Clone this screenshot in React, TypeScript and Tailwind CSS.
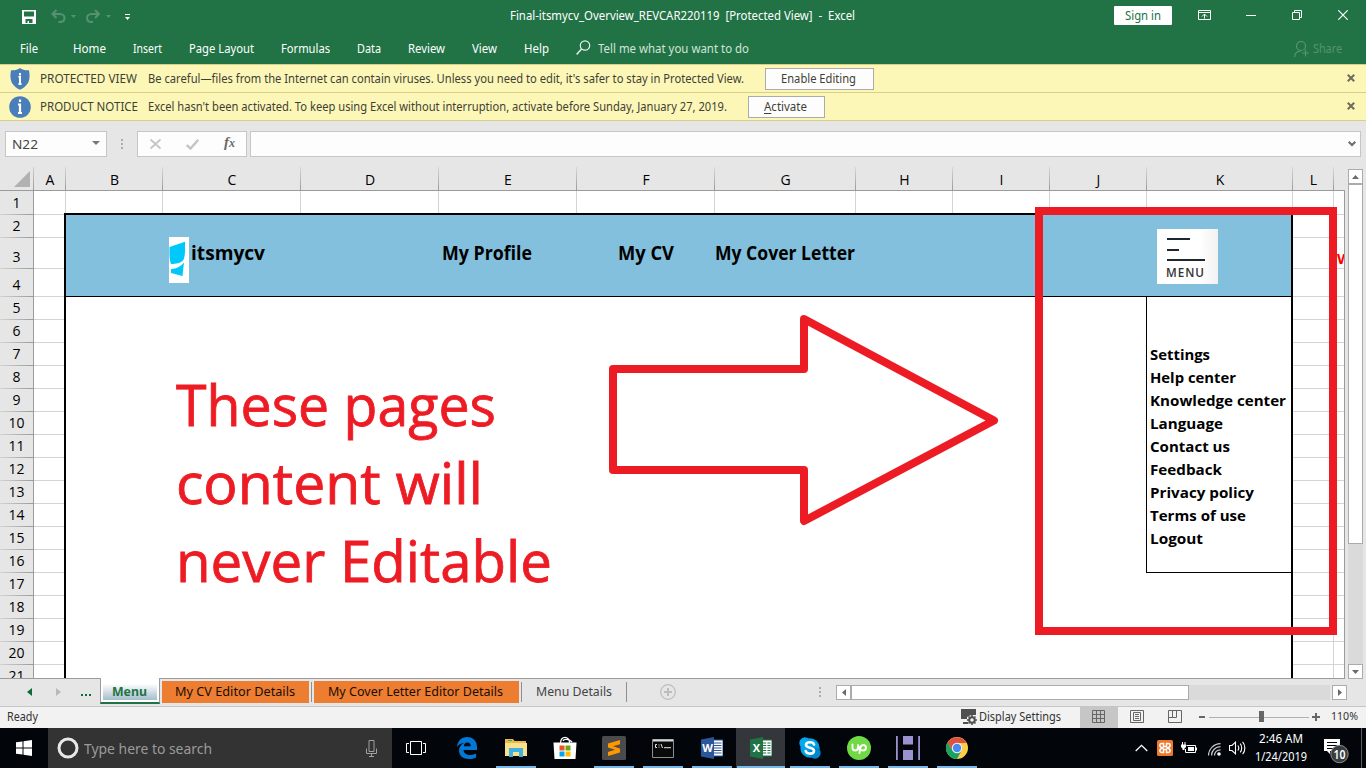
import { useLayoutEffect, useRef, useState } from "react";
import type { ReactNode } from "react";

/* Text run that is condensed or widened to occupy an exact width. */
function Fit({ w, className = "", children }: { w: number; className?: string; children: ReactNode }) {
  const ref = useRef<HTMLSpanElement>(null);
  const [k, setK] = useState(1);
  useLayoutEffect(() => {
    if (ref.current && ref.current.offsetWidth) {
      const r = document.createRange();
      r.selectNodeContents(ref.current);
      const natural = r.getBoundingClientRect().width / k;
      if (natural > 0 && Math.abs(w / natural - k) > 0.001) setK(w / natural);
    }
  }, [w]);
  return (
    <span className={"inline-block shrink-0 whitespace-pre text-left " + className} style={{ width: w }}>
      <span ref={ref} className="inline-block origin-left" style={{ transform: `scaleX(${k})` }}>
        {children}
      </span>
    </span>
  );
}

function Icon({ w, h, className = "", children }: { w: number; h: number; className?: string; children: ReactNode }) {
  return (
    <svg width={w} height={h} viewBox={`0 0 ${w} ${h}`} className={"block shrink-0 " + className} fill="none">
      {children}
    </svg>
  );
}

function TitleBar() {
  return (
    <div className="flex h-8 items-start text-[12px] leading-[31px] text-white">
      <Icon w={14} h={14} className="ml-[22px] mt-[10px]">
        <path fillRule="evenodd" fill="#fff" d="M0 0H14V14H0ZM2 1.5V6.5H12V1.5ZM3.5 9V13H5.5V11H7V13H10.5V9Z" />
      </Icon>
      <Icon w={26} h={14} className="ml-[15px] mt-[9px]">
        <path d="M5.500 1L1.500 5L5.500 9M1.500 5H9C12 5 13.500 7 13.500 9C13.500 11.500 12 13 9 13H7.500" stroke="#549273" strokeWidth="2" />
        <path d="M20 6H25L22.500 9Z" fill="#549273" />
      </Icon>
      <Icon w={26} h={14} className="ml-[9px] mt-[9px]">
        <path d="M9 1L13 5L9 9M13 5H5.500C2.500 5 1 7 1 9C1 11.500 2.500 13 5.500 13H7" stroke="#549273" strokeWidth="2" />
        <path d="M20 6H25L22.500 9Z" fill="#549273" />
      </Icon>
      <Icon w={6} h={7} className="ml-[13px] mt-[13px]">
        <path d="M0 1.500H5" stroke="#fff" />
        <path d="M0 4H5L2.500 7Z" fill="#fff" />
      </Icon>
      <Fit w={345} className="ml-[379px]">{"Final-itsmycv_Overview_REVCAR220119  [Protected View]  -  Excel"}</Fit>
      <div className="ml-[259px] mt-[6px] flex h-[19px] w-[58px] justify-center rounded-[1px] bg-white text-[#217346]">
        <Fit w={36} className="leading-[19px]">Sign in</Fit>
      </div>
      <Icon w={13} h={10} className="ml-[26px] mt-[10px]">
        <path d="M.5 .5H12.500V9.500H.5ZM.5 2.500H12.500M6.500 8.500V4M4 6.500L6.500 4L9 6.500" stroke="#fff" />
      </Icon>
      <div className="ml-[35px] mt-[15px] h-px w-[10px] bg-white" />
      <Icon w={10} h={10} className="ml-[36px] mt-[10px]">
        <path d="M.5 2.500H7.500V9.500H.5ZM2.500 2V.5H9.500V7.500H8" stroke="#fff" />
      </Icon>
      <Icon w={10} h={10} className="ml-[36px] mt-[10px]">
        <path d="M.3 .3L9.700 9.700M9.700 .3L.3 9.700" stroke="#fff" strokeWidth="1.200" />
      </Icon>
    </div>
  );
}

const MENUS: [string, number, string][] = [
  ["File", 18, "ml-[20px]"],
  ["Home", 33, "ml-[35px]"],
  ["Insert", 29, "ml-[27px]"],
  ["Page Layout", 65, "ml-[27px]"],
  ["Formulas", 49, "ml-[27px]"],
  ["Data", 24, "ml-[27px]"],
  ["Review", 37, "ml-[27px]"],
  ["View", 25, "ml-[27px]"],
  ["Help", 25, "ml-[27px]"],
];

function MenuRow() {
  return (
    <div className="flex h-8 text-[12px] leading-[33px] text-white">
      {MENUS.map(([t, w, m]) => (
        <Fit key={t} w={w} className={m}>{t}</Fit>
      ))}
      <Icon w={15} h={16} className="ml-[27px] mt-[8px]">
        <circle cx="9" cy="5.500" r="4.700" stroke="#e4efe8" strokeWidth="1.200" />
        <path d="M5.500 9L.6 14.500" stroke="#e4efe8" strokeWidth="1.500" />
      </Icon>
      <Fit w={151} className="ml-[7px] text-[#d3e3da]">Tell me what you want to do</Fit>
      <Icon w={16} h={17} className="ml-[545px] mt-[9px]">
        <circle cx="7" cy="5" r="4.500" stroke="#57946f" strokeWidth="1.200" />
        <path d="M.5 16C.8 12.500 3 10 7 9.800M11.500 8.500V15.500M8 12H15" stroke="#57946f" strokeWidth="1.200" />
      </Icon>
      <Fit w={29} className="ml-[3px] text-[#57946f]">Share</Fit>
    </div>
  );
}

function NoticeClose() {
  return (
    <Icon w={8} h={8} className="ml-auto mr-[11px] mt-[-1px]">
      <path d="M.8 .8L7.200 7.200M7.200 .8L.8 7.200" stroke="#6e6c5a" strokeWidth="2" />
    </Icon>
  );
}

function Notices() {
  return (
    <div className="bg-[#fcf7b6] text-[12px] text-[#3f3f37]">
      <div className="flex h-[29px] items-center border-y border-[#d6d088] leading-[27px]">
        <Icon w={20} h={22} className="ml-[10px]">
          <path d="M10 0C8 2 4 2.500 1 2.300C-.5 11 .5 17 10 21.800C19.500 17 20.500 11 19 2.300C16 2.500 12 2 10 0Z" fill="#4a7ebb" />
          <path d="M10 5V7.500M8.500 9H10V16M8.500 16H11.500M10 8.500V16" stroke="#fff" strokeWidth="2" />
        </Icon>
        <Fit w={97} className="ml-[10px]">PROTECTED VIEW</Fit>
        <Fit w={596} className="ml-[11px]">Be careful—files from the Internet can contain viruses. Unless you need to edit, it's safer to stay in Protected View.</Fit>
        <div className="ml-[21px] flex h-[22px] w-[109px] border border-[#ababab] bg-[#fdfdfd] pl-[15px] leading-[20px]">
          <Fit w={75}>Enable Editing</Fit>
        </div>
        <NoticeClose />
      </div>
      <div className="flex h-[28px] items-center border-b border-[#d6d088] leading-[27px]">
        <Icon w={22} h={22} className="ml-[9px]">
          <circle cx="11" cy="11" r="10.800" fill="#4a7ebb" />
          <path d="M11 3.500V6M9 8.500H11M11 7.500V17M9 17H13" stroke="#fff" strokeWidth="2.200" />
        </Icon>
        <Fit w={98} className="ml-[9px]">PRODUCT NOTICE</Fit>
        <Fit w={579} className="ml-[10px]">Excel hasn't been activated. To keep using Excel without interruption, activate before Sunday, January 27, 2019.</Fit>
        <div className="ml-[21px] flex h-[22px] w-[77px] border border-[#ababab] bg-[#fdfdfd] pl-[15px] leading-[20px]">
          <Fit w={43}><span className="underline underline-offset-2">A</span>ctivate</Fit>
        </div>
        <NoticeClose />
      </div>
    </div>
  );
}

function FormulaBar() {
  return (
    <div className="flex h-[46px] items-start pt-[10px]">
      <div className="ml-[5px] flex h-[26px] w-[102px] items-center border border-[#c6c6c6] bg-[#fdfdfd] pl-[6px] text-[13px] text-[#444]">
        <Fit w={26} className="mt-[2px]">N22</Fit>
        <Icon w={8} h={4} className="ml-auto mr-[6px] -mt-[2px]"><path d="M0 0H8L4 4Z" fill="#777" /></Icon>
      </div>
      <Icon w={2} h={10} className="ml-[14px] mt-[8px]">
        <path d="M0 0H2V2H0ZM0 4H2V6H0ZM0 8H2V10H0Z" fill="#ababab" />
      </Icon>
      <div className="ml-[14px] flex h-[26px] w-[110px] items-center border border-[#c6c6c6] bg-[#fdfdfd]">
        <Icon w={11} h={10} className="ml-[12px]">
          <path d="M.5 .5L10.500 9.500M10.500 .5L.5 9.500" stroke="#c3c3c3" strokeWidth="1.800" />
        </Icon>
        <Icon w={13} h={11} className="ml-[25px]">
          <path d="M.8 6L4.500 9.500L12.300 .8" stroke="#c3c3c3" strokeWidth="2.400" />
        </Icon>
        <span className="-mt-1 ml-[25px] font-['Liberation_Serif',serif] text-[15px] font-bold italic leading-none text-[#6a6a6a]">f<span className="text-[12px]">x</span></span>
      </div>
      <div className="ml-[3px] flex h-[26px] w-[1111px] items-center border border-[#c6c6c6] bg-[#fdfdfd]">
        <Icon w={8} h={6} className="ml-auto mr-[4px] -mt-[1px]"><path d="M.7 .7L4 4L7.300 .7" stroke="#6a6a6a" strokeWidth="2" /></Icon>
      </div>
    </div>
  );
}

const COLS: [string, string][] = [
  ["A", "w-[32px]"], ["B", "w-[97px]"], ["C", "w-[138px]"], ["D", "w-[138px]"], ["E", "w-[138px]"],
  ["F", "w-[138px]"], ["G", "w-[141px]"], ["H", "w-[97px]"], ["I", "w-[97px]"], ["J", "w-[97px]"],
  ["K", "w-[146px]"], ["L", "w-[41px]"],
];

const ROWS: [number, string][] = [
  [1, "h-[24px]"], [2, "h-[23px]"], [3, "h-[31px]"], [4, "h-[28px]"],
  ...Array.from({ length: 17 }, (_, i): [number, string] => [i + 5, "h-[23px]"]),
];

const LINKS: [string, number][] = [
  ["Settings", 60], ["Help center", 86], ["Knowledge center", 136], ["Language", 73], ["Contact us", 80],
  ["Feedback", 72], ["Privacy policy", 104], ["Terms of use", 96], ["Logout", 53],
];

function PageBlock() {
  return (
    <div className="z-10 -ml-[2px] -mt-[2px] flex w-[1229px] flex-col border-x-2 border-t-2 border-black bg-white">
      <div className="flex h-[82px] shrink-0 items-start border-b border-black bg-[#82c0dd] text-[19px] font-bold leading-[26px] text-black">
        <Icon w={20} h={46} className="ml-[103px] mt-[22px] bg-white">
          <path d="M.5 10L16 4.800C16 12 16.500 20 14 23.500C12 26 7 27 2 27C0 22 .5 15 .5 10Z" fill="#00c8fa" />
          <path d="M2 32C8 32 12 29 15 25.500C14.500 30 14 34 13.500 39L2 36Z" fill="#00c8fa" />
        </Icon>
        <Fit w={74} className="ml-[2px] mt-[25px]">itsmycv</Fit>
        <Fit w={90} className="ml-[177px] mt-[25px]">My Profile</Fit>
        <Fit w={56} className="ml-[86px] mt-[25px]">My CV</Fit>
        <Fit w={140} className="ml-[41px] mt-[25px]">My Cover Letter</Fit>
        <div className="ml-[302px] mt-[14px] flex h-[55px] w-[61px] flex-col items-start bg-linear-to-r from-white from-70% to-[#f1f1f1] pl-[10px] pt-[9px]">
          <div className="h-[2px] w-[23px] bg-[#1d2733]" />
          <div className="mt-[9px] h-[2px] w-[12px] bg-[#1d2733]" />
          <div className="mt-[8px] h-[2px] w-[38px] bg-[#1d2733]" />
          <Fit w={39} className="-ml-px mt-[4px] text-[12px] font-semibold leading-[16px] tracking-[1px] text-[#333]">MENU</Fit>
        </div>
      </div>
      <div className="flex h-[276px] shrink-0 justify-end">
        <div className="flex w-[145px] flex-col border-b border-l border-black pl-[3px] pt-[46px] text-[14px] font-bold leading-[23px] text-black">
          {LINKS.map(([t, w]) => <Fit key={t} w={w}>{t}</Fit>)}
        </div>
      </div>
    </div>
  );
}

function Sheet() {
  return (
    <div className="relative flex h-[512px] w-[1345px] flex-col overflow-hidden border-b border-[#9b9b9b] font-['Open_Sans',sans-serif] text-[14px] text-black">
      <div className="flex h-[24px] shrink-0 leading-[25px]">
        <div className="flex w-[34px] shrink-0 items-end justify-end border-b border-[#9b9b9b]">
          <Icon w={16} h={16} className="mb-[3px] mr-[3px]"><path d="M16 0V16H0Z" fill="#b1b1b1" /></Icon>
          <div className="h-[23px] w-px bg-linear-to-b from-[#d0d0d0] to-[#9b9b9b]" />
        </div>
        {COLS.map(([c, w]) => (
          <div key={c} className={"flex shrink-0 border-b border-[#9b9b9b] " + w}>
            <span className="flex-1 pl-px text-center">{c}</span>
            <span className="w-px bg-linear-to-b from-[#d8d8d8] to-[#9b9b9b]" />
          </div>
        ))}
        <div className="flex-1 border-b border-[#9b9b9b]" />
      </div>
      <div className="flex min-h-0 flex-1">
        <div className="w-[34px] shrink-0 border-r border-[#9b9b9b] leading-[21px]">
          {ROWS.map(([n, h]) => (
            <div key={n} className={"flex flex-col justify-end text-center " + h}>
              <span className="h-[22px]">{n}</span>
              <span className="h-px shrink-0 bg-linear-to-r from-[#d4d4d4] to-[#9b9b9b]" />
            </div>
          ))}
        </div>
        <div className="flex flex-1 flex-col border-r border-[#9b9b9b] bg-white">
          <div className="flex h-[24px] shrink-0">
            {COLS.map(([c, w]) => <div key={c} className={"shrink-0 border-b border-r border-[#d4d4d4] " + w} />)}
            <div className="flex-1 border-b border-[#d4d4d4]" />
          </div>
          <div className="flex flex-1">
            <div className="w-[32px] shrink-0">
              {ROWS.slice(1).map(([n, h]) => <div key={n} className={"border-b border-[#d4d4d4] " + h} />)}
            </div>
            <PageBlock />
            <div className="w-[41px] shrink-0 border-r border-[#d4d4d4]">
              {ROWS.slice(1).map(([n, h]) => <div key={n} className={"border-b border-[#d4d4d4] " + h} />)}
            </div>
            <div className="w-[10px] shrink-0 overflow-hidden text-[15px] font-bold leading-[40px] text-[#f00]">
              {ROWS.slice(1).map(([n, h]) => (
                <div key={n} className={"border-b border-[#d4d4d4] pl-[3px] " + h}>{n === 3 && "W"}</div>
              ))}
            </div>
          </div>
        </div>
      </div>

      {/* annotations floating over the cells */}
      <div className="absolute left-[176px] top-[198px] z-20 flex flex-col text-[56px] leading-[78px] text-[#ed1c24] [-webkit-text-stroke:0.8px_#ed1c24]">
        <Fit w={320}>These pages</Fit>
        <Fit w={307}>content will</Fit>
        <Fit w={376}>never Editable</Fit>
      </div>
      <svg width="400" height="220" viewBox="600 310 400 220" fill="none" className="absolute left-[600px] top-[143px] z-20">
        <path d="M613 369H804V319L994 420.500L804 521V470H613Z" stroke="#ed1c24" strokeWidth="8" strokeLinejoin="round" />
      </svg>
    </div>
  );
}

function VScroll() {
  return (
    <div className="ml-[3px] mt-[2px] flex h-[510px] w-[15px] flex-col bg-[#dadada]">
      <div className="flex h-[15px] items-center justify-center border border-[#ababab] bg-white">
        <Icon w={7} h={4}><path d="M3.500 0L7 4H0Z" fill="#6a6a6a" /></Icon>
      </div>
      <div className="h-[360px] border border-[#ababab] bg-white" />
      <div className="mt-auto flex h-[15px] items-center justify-center border border-[#ababab] bg-white">
        <Icon w={7} h={4}><path d="M3.500 4L7 0H0Z" fill="#6a6a6a" /></Icon>
      </div>
    </div>
  );
}

function SheetTabs() {
  return (
    <div className="flex h-[28px] items-start border-b border-[#c6c6c6] text-[13px] leading-[25px] text-[#444]">
      <Icon w={5} h={8} className="ml-[27px] mt-[9px]"><path d="M5 0V8L0 4Z" fill="#0e6a38" /></Icon>
      <Icon w={5} h={8} className="ml-[24px] mt-[9px]"><path d="M0 0V8L5 4Z" fill="#b9b9b9" /></Icon>
      <Icon w={11} h={3} className="ml-[20px] mt-[15px]"><path d="M0 0H2V2H0ZM4 0H6V2H4ZM8 0H10V2H8Z" fill="#0e6a38" /></Icon>
      <div className="relative z-10 -mt-px ml-[8px] h-[26px] w-[60px] border-b-2 border-l border-r border-b-[#217346] border-l-[#9b9b9b] border-r-[#9b9b9b] bg-white px-[2px] pb-[2px] pt-[4px]">
        <div className="h-full bg-linear-to-b from-white from-10% to-[#a5bdcb] pl-[9px] font-bold leading-[18px] text-[#217346]">
          <Fit w={35}>Menu</Fit>
        </div>
      </div>
      <div className="ml-[2px] mt-[2px] flex h-[22px] w-[147px] bg-[#ed7d31] pl-[13px] leading-[21px] text-[#1a0d04]"><Fit w={120}>My CV Editor Details</Fit></div>
      <div className="ml-[2px] mt-[3px] h-[20px] w-px bg-[#8f8f8f]" />
      <div className="ml-[2px] mt-[2px] flex h-[22px] w-[205px] bg-[#ed7d31] pl-[14px] leading-[21px] text-[#1a0d04]"><Fit w={175}>My Cover Letter Editor Details</Fit></div>
      <div className="ml-[2px] mt-[3px] h-[20px] w-px bg-[#8f8f8f]" />
      <Fit w={76} className="ml-[14px]">Menu Details</Fit>
      <div className="ml-[14px] mt-[3px] h-[20px] w-px bg-[#8f8f8f]" />
      <Icon w={16} h={16} className="ml-[33px] mt-[5px]">
        <circle cx="8" cy="8" r="7.300" stroke="#bdbdbd" strokeWidth="1.200" />
        <path d="M8 4V12M4 8H12" stroke="#bdbdbd" strokeWidth="2" />
      </Icon>
      <Icon w={2} h={10} className="ml-[143px] mt-[8px]"><path d="M0 0H2V2H0ZM0 4H2V6H0ZM0 8H2V10H0Z" fill="#ababab" /></Icon>
      <div className="ml-[15px] mt-[6px] flex h-[15px] w-[511px] bg-[#dadada]">
        <div className="flex w-[15px] shrink-0 items-center justify-center border border-[#ababab] bg-white">
          <Icon w={4} h={7}><path d="M4 0V7L0 3.500Z" fill="#6a6a6a" /></Icon>
        </div>
        <div className="w-[338px] border border-[#ababab] bg-white" />
        <div className="ml-auto w-[2px] bg-[#e6e6e6]" />
        <div className="flex w-[15px] shrink-0 items-center justify-center border border-[#ababab] bg-white">
          <Icon w={4} h={7}><path d="M0 0V7L4 3.500Z" fill="#6a6a6a" /></Icon>
        </div>
      </div>
    </div>
  );
}

function StatusBar() {
  return (
    <div className="flex h-[21px] items-start bg-[#f2f2f2] text-[12px] leading-[20px] text-[#333]">
      <Fit w={31} className="ml-[7px]">Ready</Fit>
      <Icon w={16} h={16} className="ml-[923px] mt-[2px]">
        <path d="M0 0H15V6H10L6 8V10H0ZM2 13H7V15H2Z" fill="#505050" />
        <circle cx="11" cy="11" r="2.800" stroke="#505050" strokeWidth="2" />
        <path d="M11 6V8M11 14V16M6 11H8M14 11H16M7.500 7.500L9 9M13 13L14.500 14.500M14.500 7.500L13 9M9 13L7.500 14.500" stroke="#505050" strokeWidth="1.600" />
      </Icon>
      <Fit w={82} className="ml-[2px]">Display Settings</Fit>
      <div className="ml-[19px] flex h-[21px] w-[38px] justify-center bg-[#c6c6c6]">
        <Icon w={13} h={13} className="-ml-px mt-[3px]"><path d="M.5 .5H12.500V12.500H.5ZM4.500 0V13M8.500 0V13M0 4.500H13M0 8.500H13" stroke="#666" /></Icon>
      </div>
      <Icon w={14} h={13} className="ml-[12px] mt-[3px]">
        <path d="M.5 .5H13.500V12.500H.5ZM3.500 2.500H10.500V10.500H3.500ZM5 4.500H9M5 6.500H9M5 8.500H9" stroke="#666" />
      </Icon>
      <Icon w={14} h={13} className="ml-[24px] mt-[3px]">
        <path d="M.5 .5H13.500V12.500H.5ZM.5 7.500H8.500V.5M4.500 .5V7.500" stroke="#666" />
      </Icon>
      <div className="ml-[17px] mt-[9px] h-[2px] w-[6px] bg-[#666]" />
      <Icon w={100} h={11} className="ml-[4px] mt-[4px]">
        <path d="M0 6.500H100" stroke="#b0b0b0" />
        <path d="M50 0H55V11H50Z" fill="#666" />
      </Icon>
      <Icon w={8} h={8} className="ml-[3px] mt-[6px]"><path d="M4 0V8M0 4H8" stroke="#666" strokeWidth="2" /></Icon>
      <Fit w={27} className="ml-[11px] mt-[-1px] text-[11.500px]">110%</Fit>
    </div>
  );
}

function OfficeIcon({ color, dark, letter }: { color: string; dark: string; letter: string }) {
  return (
    <Icon w={22} h={22}>
      <path d="M12 3H22V19H12Z" fill="#fff" stroke={dark} />
      <path d="M13 6H20.500M13 8.500H20.500M13 11H20.500M13 13.500H20.500M13 16H20.500" stroke={color} strokeWidth="1.200" />
      {letter === "X" && <path d="M16.800 4V18" stroke="#fff" strokeWidth="1.200" />}
      <path d="M0 2.500L13 0V22L0 19.500Z" fill={color} />
      <text x="6.500" y="15" textAnchor="middle" fontSize="11" fontWeight="bold" fill="#fff" fontFamily="Open Sans, sans-serif">{letter}</text>
    </Icon>
  );
}

const APPS: { id: string; line: string; icon: ReactNode }[] = [
  {
    id: "edge", line: "",
    icon: (
      <Icon w={20} h={22}>
        <path fillRule="evenodd" d="M0 10C.5 4 4.500 0 10 0C16.500 0 20 4.500 20 10V13H6.500C6.800 16.500 9.500 18 13 18C15.500 18 17.500 17.300 19 16.500V20.500C17 21.500 14.500 22 12 22C6 22 2 18.500 2 13.500C2 10 4 7.200 7.500 5.700C4.500 6 1.500 7.500 0 10ZM6.800 9.200H13.800C13.800 6.800 12.500 5.600 10.500 5.600C8.300 5.600 7 7.200 6.800 9.200Z" fill="#0078d7" />
      </Icon>
    ),
  },
  {
    id: "files", line: "w-[40px]",
    icon: (
      <Icon w={22} h={20}>
        <path d="M0 1H8L9.500 3H21V18H0Z" fill="#e8b94f" />
        <path d="M0 5H22V18H0Z" fill="#fbe08c" />
        <path d="M4 19V10H18V19H14V14H8V19Z" fill="#3fb0e0" />
        <path d="M3 2.500H7" stroke="#4aa564" />
      </Icon>
    ),
  },
  {
    id: "store", line: "",
    icon: (
      <Icon w={24} h={24}>
        <path d="M7.500 7C7.500 -.5 16.500 -.5 16.500 7M10 5C11 2.500 16 3 19 6" stroke="#fff" strokeWidth="1.300" />
        <path d="M.5 6.500H23.500L22.500 23H1.500Z" fill="#fff" />
        <path d="M6.500 9.500H11.500V14.500H6.500Z" fill="#f25022" /><path d="M12.500 9.500H17.500V14.500H12.500Z" fill="#6aaa10" />
        <path d="M6.500 15.500H11.500V20.500H6.500Z" fill="#00a4ef" /><path d="M12.500 15.500H17.500V20.500H12.500Z" fill="#ffb900" />
      </Icon>
    ),
  },
  {
    id: "sublime", line: "w-[40px]",
    icon: (
      <Icon w={24} h={24}>
        <rect width="24" height="24" rx="1.500" fill="#4b4b4b" />
        <path d="M6 7.500L18 4V8.200L11 10.200L18 12.500V16.500L6 20V16L13 13.800L6 11.500Z" fill="#ff9800" />
      </Icon>
    ),
  },
  {
    id: "cmd", line: "w-[40px]",
    icon: (
      <Icon w={22} h={19}>
        <path d="M.5 .5H21.500V18.500H.5Z" fill="#0a0a0a" stroke="#8b8f93" />
        <path d="M1 1.500H21" stroke="#d7dade" strokeWidth="2" />
        <path d="M5 5.500H3.500V8.500H5M7 5.500V6.500M7 7.700V8.700M9 5L10.500 9M12 8.700H19" stroke="#e6e6e6" />
      </Icon>
    ),
  },
  { id: "word", line: "w-[40px]", icon: <OfficeIcon color="#2b579a" dark="#2b579a" letter="W" /> },
  { id: "excel", line: "w-[48px]", icon: <OfficeIcon color="#217346" dark="#217346" letter="X" /> },
  {
    id: "skype", line: "w-[40px]",
    icon: (
      <Icon w={22} h={22}>
        <circle cx="11" cy="11" r="9.700" fill="#00a1e6" /><circle cx="6" cy="6" r="5.700" fill="#00a9ee" /><circle cx="16" cy="16" r="5.700" fill="#0087d1" />
        <path d="M15 7.500C14.500 5.800 12.800 5.300 11 5.300C8.700 5.300 7 6.300 7 8C7 11.500 15 10 15 13.700C15 15.600 13 16.600 11 16.600C8.800 16.600 7.200 15.800 6.700 14" stroke="#fff" strokeWidth="2.600" strokeLinecap="round" />
      </Icon>
    ),
  },
  {
    id: "upwork", line: "w-[40px]",
    icon: (
      <Icon w={24} h={24}>
        <circle cx="12" cy="12" r="12" fill="#6fda44" />
        <path d="M5.500 8.500V11.500C5.500 15.500 11 15.500 11 11.500V8.500C11.500 11.500 13 14.500 16 14.500C20 14.500 20 9 16 9C13.500 9 13 11.500 12.500 17" stroke="#fff" strokeWidth="1.900" strokeLinecap="round" />
      </Icon>
    ),
  },
  {
    id: "hs", line: "w-[40px]",
    icon: (
      <Icon w={24} h={24}>
        <path d="M0 0H1.800V24H0ZM22.200 0H24V24H22.200ZM7 0H17V8.500H7ZM7 14H17V24H7Z" fill="#9b93cf" />
        <path d="M3.500 0V24M20.500 0V24" stroke="#0b0712" strokeWidth="2" />
      </Icon>
    ),
  },
  {
    id: "chrome", line: "w-[40px]",
    icon: (
      <Icon w={22} h={22}>
        <circle cx="11" cy="11" r="11" fill="#ffcd46" />
        <path d="M1.470 5.500A11 11 0 0 0 11 22L15.500 13.500L11 11L6.500 13.500Z" fill="#1aa260" />
        <path d="M1.470 5.500L6.500 13.500L11 6H20.530A11 11 0 0 0 1.470 5.500Z" fill="#de5246" />
        <circle cx="11" cy="11" r="5.200" fill="#f5f5f5" /><circle cx="11" cy="11" r="4.200" fill="#4a8af4" />
      </Icon>
    ),
  },
];

function Taskbar() {
  return (
    <div className="flex h-[40px] items-center bg-[#02060b] text-white">
      <Icon w={16} h={16} className="ml-[16px]">
        <path d="M0 2.300L6.500 1.400V7.500H0ZM7.500 1.200L16 0V7.500H7.500ZM0 8.500H6.500V14.600L0 13.700ZM7.500 8.500H16V16L7.500 14.800Z" fill="#fff" />
      </Icon>
      <div className="ml-[16px] flex h-full w-[344px] items-center bg-[#333] text-[14px] text-[#9a9a9a]">
        <Icon w={22} h={22} className="ml-[9px]">
          <circle cx="11" cy="11" r="9" stroke="#e8e8e8" strokeWidth="3" />
        </Icon>
        <Fit w={128} className="ml-[5px]">Type here to search</Fit>
        <Icon w={11} h={17} className="ml-auto mr-[15px]">
          <path d="M3 .5H8V11.500H3ZM.5 8.500V13.500H10.500V8.500M5.500 13.500V16M3 16.500H8" stroke="#a0a0a0" />
        </Icon>
      </div>
      <div className="flex w-[50px] shrink-0 pl-[14px]">
        <Icon w={20} h={14}>
          <path d="M4.500 .5H15.500V13.500H4.500ZM3 2.500H.5V11.500H3M17 2.500H19.500V11.500H17" stroke="#fff" />
        </Icon>
      </div>
      {APPS.map((a) => (
        <div key={a.id} className={"flex h-full w-[49px] shrink-0 flex-col items-center " + (a.id === "excel" ? "bg-[#33373b]" : "")}>
          <div className="flex flex-1 items-center">{a.icon}</div>
          {a.line ? <div className={"-mt-[2px] h-[2px] bg-[#76b9ed] " + a.line} /> : null}
        </div>
      ))}
      <Icon w={13} h={8} className="ml-[154px]"><path d="M.7 7L6.500 1.300L12.300 7" stroke="#fff" strokeWidth="1.300" /></Icon>
      <Icon w={16} h={16} className="ml-[9px]">
        <rect width="16" height="16" rx="1.500" fill="#f0772b" />
        <path d="M5.500 8C1.500 6.500 2.500 3.500 5 3.500H6.500V6.500H9.500V3.500H11C13.500 3.500 14.500 6.500 10.500 8C14.500 9.500 13.500 12.500 11 12.500H9.500V9.500H6.500V12.500H5C2.500 12.500 1.500 9.500 5.500 8Z" stroke="#fff" strokeWidth="1.500" />
      </Icon>
      <Icon w={16} h={12} className="ml-[8px]">
        <path d="M5.500 3.500H14.500V10.500H4.500V7" stroke="#fff" />
        <path d="M7 5H13V9H7ZM15 5.500H16V8.500H15ZM0 2.500H5V5L3.500 6.500V8H1.500V6.500L0 5ZM1 0H2V2.500H1ZM3.500 0H4.500V2.500H3.500Z" fill="#fff" />
      </Icon>
      <Icon w={13} h={13} className="ml-[11px] mt-[2px]">
        <path d="M.5 12.500C.5 6 6 .6 12.500 .6M3.500 12.500C3.500 7.500 7.500 3.700 12.500 3.700M6.500 12.500C6.500 9 9 6.800 12.500 6.800" stroke="#cfcfcf" strokeWidth="1.200" />
        <circle cx="11" cy="11" r="1.800" fill="#fff" />
      </Icon>
      <Icon w={17} h={14} className="ml-[8px]">
        <path d="M.5 4.500H3L6.500 1.200V12.800L3 9.500H.5ZM8.800 4.500C10 6 10 8 8.800 9.500M11.200 2.700C13.200 5 13.200 9 11.200 11.300M13.600 .8C16.600 4 16.600 10 13.600 13.200" stroke="#fff" strokeWidth="1.100" />
      </Icon>
      <div className="ml-[8px] flex w-[53px] flex-col items-center text-[12px] leading-[18px]">
        <Fit w={44}>2:46 AM</Fit>
        <Fit w={52}>1/24/2019</Fit>
      </div>
      <Icon w={26} h={26} className="ml-[17px] mt-[5px]">
        <path d="M0 1H16V13H6V16L3 13H0Z" fill="#fff" />
        <path d="M3 4.500H13M3 7.500H13M3 10.500H9" stroke="#02060b" />
        <circle cx="15.500" cy="16" r="8.700" fill="#3a3d40" stroke="#8b8d90" />
        <text x="15.500" y="20.500" textAnchor="middle" fontSize="12" fontWeight="600" textLength="12" lengthAdjust="spacingAndGlyphs" fill="#fff" fontFamily="Noto Sans, sans-serif">10</text>
      </Icon>
      <div className="ml-auto mr-[4px] h-full w-px bg-[#5b5d60]" />
    </div>
  );
}

export default function App() {
  return (
    <div className="flex h-[768px] w-[1366px] flex-col overflow-hidden bg-[#e6e6e6] font-['Noto_Sans',sans-serif]">
      <div className="bg-[#217346]">
        <TitleBar />
        <MenuRow />
      </div>
      <Notices />
      <FormulaBar />
      <div className="relative flex h-[512px] shrink-0">
        <Sheet />
        <VScroll />
        <div className="absolute left-[1035px] top-[40px] z-20 h-[428px] w-[302px] border-8 border-[#ed1c24]" />
      </div>
      <SheetTabs />
      <StatusBar />
      <Taskbar />
    </div>
  );
}
